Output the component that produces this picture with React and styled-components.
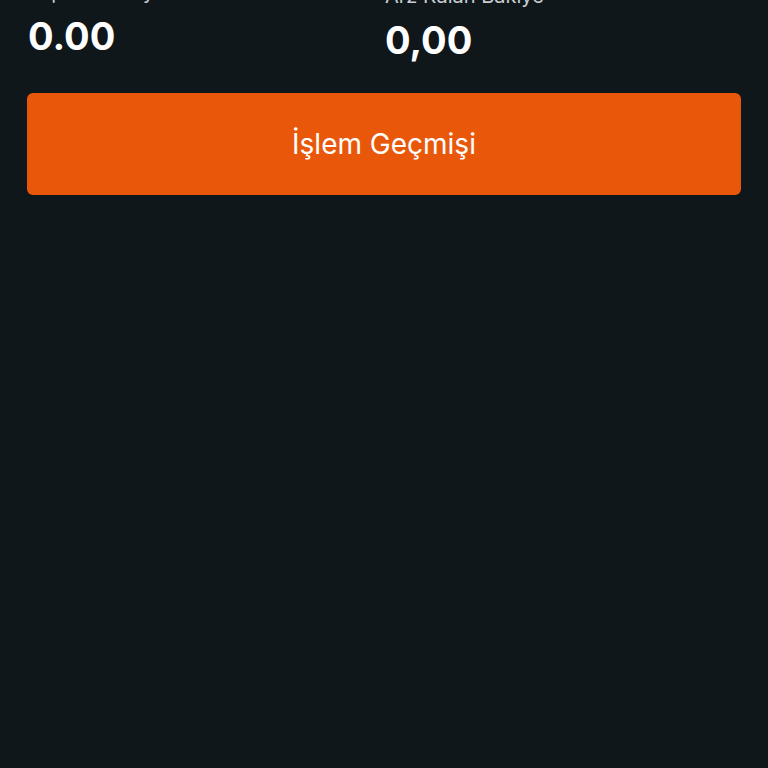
import React from 'react'
import styled, { createGlobalStyle } from 'styled-components'

const GlobalStyle = createGlobalStyle`
  html, body {
    margin: 0;
    padding: 0;
    background: #0f171b;
    font-family: Inter, "Noto Sans", sans-serif;
  }
`;

const Page = styled.div`
  min-height: 768px;
  background: #0f171b;
  padding: 0 27px;
  box-sizing: border-box;
  overflow: hidden;
`;

const Balances = styled.div`
  display: grid;
  grid-template-columns: 1fr 1fr;
  margin-top: -20px;
`;

const Balance = styled.div`
  display: flex;
  flex-direction: column;
  padding-left: ${p => p.$inset}px;
  padding-top: ${p => p.$shift}px;
`;

const Label = styled.span`
  font-size: 20px;
  line-height: 24px;
  margin-bottom: 8px;
  color: #c9cdd0;
`;

const Amount = styled.span`
  font-size: 38px;
  line-height: 48px;
  font-weight: 700;
  color: #ffffff;
`;

const HistoryButton = styled.button`
  display: flex;
  align-items: center;
  justify-content: center;
  width: 100%;
  height: 102px;
  margin-top: 29px;
  border: none;
  border-radius: 6px;
  background: #e9580a;
  color: #ffffff;
  font-family: Inter, "Noto Sans", sans-serif;
  font-size: 28px;
  font-weight: 400;
  cursor: pointer;
`;

export default function App() {
  return (
    <>
      <GlobalStyle />
      <Page>
        <Balances>
          <Balance $inset={1} $shift={0}>
            <Label>Toplam Bakiye</Label>
            <Amount>0.00</Amount>
          </Balance>
          <Balance $inset={1} $shift={4}>
            <Label>Arz Kalan Bakiye</Label>
            <Amount>0,00</Amount>
          </Balance>
        </Balances>
        <HistoryButton>İşlem Geçmişi</HistoryButton>
      </Page>
    </>
  )
}
